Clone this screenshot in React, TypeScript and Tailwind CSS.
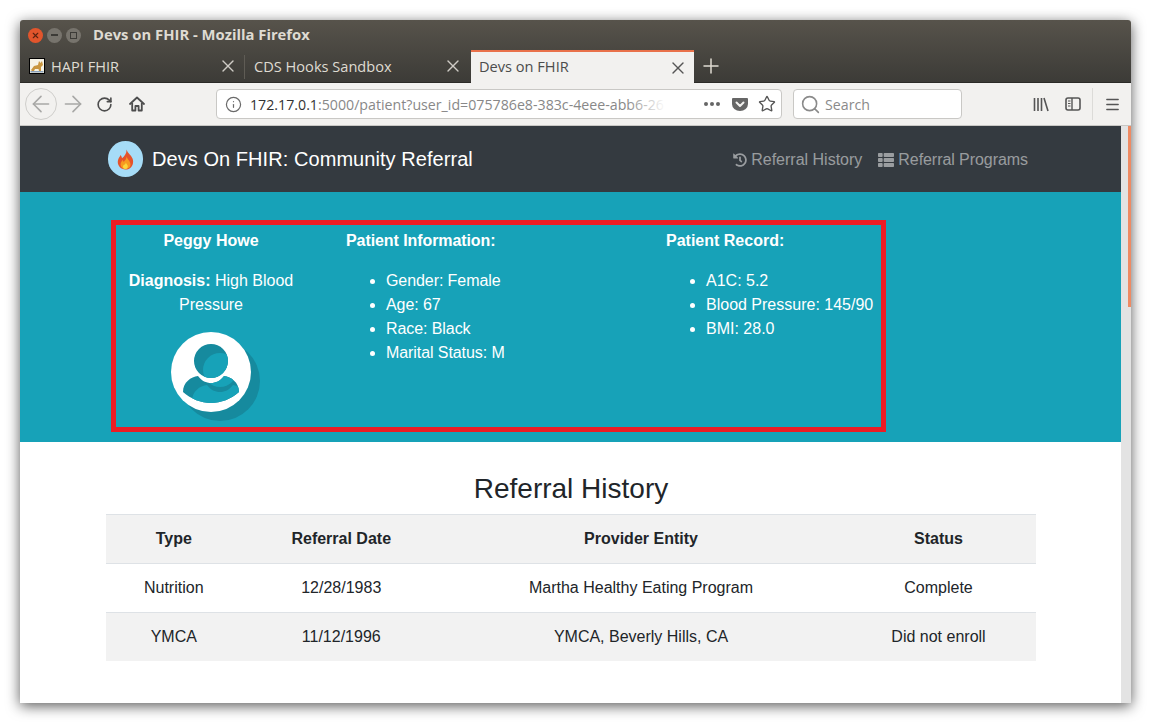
import { ArrowLeft, ArrowRight, RotateCw, Info, Star, Search, Menu, X, Plus } from "lucide-react";
import { FaHistory, FaThList } from "react-icons/fa";

const ui = "font-['Open_Sans','Noto_Sans',sans-serif]";

function Cat() {
  return (
    <svg width="16" height="16" viewBox="0 0 16 16" className="shrink-0">
      <rect x="0.5" y="0.5" width="15" height="15" fill="#f6f3e6" stroke="#000" />
      <path d="M2 12 L5 8 L9 7 L10 3 L11.5 5 L13 3 L14 7 L12 9 L12 13 L10 13 L9.5 11 L6 11 L5 13 L3 13 Z" fill="#c9963f" />
      <path d="M1.5 13 L14.5 13 L14.5 14.5 L1.5 14.5 Z" fill="#8aa0b8" />
    </svg>
  );
}

function HomeIcon() {
  return (
    <svg width="16" height="16" viewBox="0 0 16 16" fill="none" stroke="#4d4d4d" strokeWidth="1.8" strokeLinejoin="round">
      <path d="M1 8 L8 1.5 L15 8" strokeLinecap="round" />
      <path d="M3.2 7 V14.5 H6.4 V10 H9.6 V14.5 H12.8 V7" />
    </svg>
  );
}

function Pocket() {
  return (
    <svg width="16" height="16" viewBox="0 0 16 16">
      <path d="M1 2 H15 Q16 2 16 3 V8 A8 7 0 0 1 0 8 V3 Q0 2 1 2 Z" fill="#666" />
      <path d="M4.5 6.5 L8 10 L11.5 6.5" fill="none" stroke="#f2f1ef" strokeWidth="2" strokeLinecap="round" strokeLinejoin="round" />
    </svg>
  );
}

function Library() {
  return (
    <svg width="16" height="16" viewBox="0 0 16 16" stroke="#555" strokeWidth="1.6" fill="none">
      <path d="M1.5 2 V15 M5 2 V15 M8.5 2 V15 M11 2 L15 15" />
    </svg>
  );
}

function Sidebar() {
  return (
    <svg width="16" height="14" viewBox="0 0 16 14" fill="none">
      <rect x="1" y="1" width="14" height="12" rx="2" stroke="#555" strokeWidth="1.6" />
      <path d="M7 1 V13" stroke="#555" strokeWidth="1.4" />
      <path d="M3 4 H5.5 M3 6.5 H5.5 M3 9 H5.5" stroke="#555" strokeWidth="1.2" />
    </svg>
  );
}

function Flame() {
  return (
    <svg width="17" height="21" viewBox="0 0 17 21">
      <path d="M9.5 0.5 C10.5 4 14 6 15.5 9.5 C17.5 14.5 14.5 20.5 8.5 20.5 C3 20.5 -0.5 15.5 1.2 10.5 C2 8.3 3 7.5 3.6 6 C4.6 7.2 4.8 8.3 5 9.2 C7.5 7 9.8 4.5 9.5 0.5 Z" fill="#e5532b" />
      <path d="M9.5 7.5 C10 10 13.5 12 13.5 15.5 C13.5 18.3 11 20 8.5 20 C5.5 20 3.4 17.8 3.6 15 C3.8 13 5 12 5.6 11 C6.2 11.8 6.4 12.5 6.6 13 C8 11.5 9.5 10 9.5 7.5 Z" fill="#f79a1f" />
      <path d="M8.8 13.5 C9.2 15 11 16 10.8 17.8 C10.6 19.2 9.6 20 8.4 20 C7 20 6 19 6 17.7 C6 16.5 7 16.2 7.3 15.6 C7.8 15.8 8.8 14.8 8.8 13.5 Z" fill="#fcd73c" />
    </svg>
  );
}

const head = "M23 29 a17 17 0 1 0 34 0 a17 17 0 1 0 -34 0 Z";
const body = "M12 60 C12 50 20 45 27 44 C31 49 35 51 40 51 C45 51 49 49 53 44 C60 45 68 50 68 60 C60 67 50 71 40 71 C30 71 20 67 12 60 Z";

function Avatar() {
  return (
    <svg width="90" height="90" viewBox="0 0 90 90" className="block">
      <defs>
        <clipPath id="holes">
          <path d={head} />
          <path d={body} />
        </clipPath>
      </defs>
      <circle cx="49" cy="49" r="40" fill="#168a9e" />
      <circle cx="40" cy="40" r="40" fill="#fff" />
      <g clipPath="url(#holes)">
        <rect width="90" height="90" fill="#168a9e" />
        <g transform="translate(9 9)" fill="#17a2b8">
          <path d={head} />
          <path d={body} />
        </g>
      </g>
    </svg>
  );
}

const rows = [
  ["Nutrition", "12/28/1983", "Martha Healthy Eating Program", "Complete"],
  ["YMCA", "11/12/1996", "YMCA, Beverly Hills, CA", "Did not enroll"],
];

export default function App() {
  return (
    <div className="w-[1151px] h-[723px] bg-white pt-[20px] pl-[20px] overflow-hidden">
      <div className="w-[1111px] h-[683px] flex flex-col rounded-t-[3px] shadow-[0_3px_14px_rgba(0,0,0,0.65)]">
        {/* Title and tabs */}
        <div className={`${ui} h-[63px] shrink-0 flex flex-col rounded-t-[3px] bg-gradient-to-b from-[#57534b] to-[#3c3b37] border-b border-[#2b2a27]`}>
          <div className="h-[30px] flex items-center pl-[8px]">
            <div className="w-[15px] h-[15px] rounded-full bg-[#e2552c] flex items-center justify-center">
              <X size={9} color="#5a2412" strokeWidth={3} />
            </div>
            <div className="ml-[4px] w-[15px] h-[15px] rounded-full bg-[#77746d] flex items-center justify-center">
              <div className="w-[7px] h-[2px] bg-[#3c3b37]" />
            </div>
            <div className="ml-[4px] w-[15px] h-[15px] rounded-full bg-[#77746d] flex items-center justify-center">
              <div className="w-[7px] h-[7px] border border-[#3c3b37]" />
            </div>
            <span className="ml-[12px] mb-[2px] text-[14.8px] font-bold text-[#dfdbd2]">Devs on FHIR - Mozilla Firefox</span>
          </div>
          <div className="h-[32px] flex text-[14.6px] text-[#dfdbd2]">
            <div className="w-[225px] flex items-center pl-[9px] pr-[7px] relative">
              <Cat />
              <span className="ml-[6px] pt-[2px]">HAPI FHIR</span>
              <X size={20} color="#cfccc6" strokeWidth={1.6} className="ml-auto" />
              <div className="absolute right-0 top-[5px] h-[24px] w-px bg-[#5f5c55]" />
            </div>
            <div className="w-[226px] flex items-center pl-[9px] pr-[8px]">
              <span className="pt-[2px]">CDS Hooks Sandbox</span>
              <X size={20} color="#cfccc6" strokeWidth={1.6} className="ml-auto" />
            </div>
            <div className="w-[223px] h-[33px] flex items-center pl-[8px] pr-[6px] bg-[#f2f1ef] border-t-2 border-[#e9714a] text-[#4c4c4c]">
              <span className="mb-[2px]">Devs on FHIR</span>
              <X size={20} color="#555" strokeWidth={1.6} className="ml-auto" />
            </div>
            <div className="ml-[5px] flex items-center">
              <Plus size={24} color="#dfdbd2" strokeWidth={1.5} />
            </div>
          </div>
        </div>

        {/* Toolbar */}
        <div className={`${ui} h-[43px] shrink-0 bg-[#f2f1ef] border-b border-[#c9c8c5] flex items-center pl-[5px]`}>
          <div className="w-[32px] h-[32px] rounded-full border border-[#cfcecb] flex items-center justify-center shrink-0">
            <ArrowLeft size={26} color="#a8a8a6" strokeWidth={1.5} />
          </div>
          <ArrowRight size={26} color="#a8a8a6" strokeWidth={1.5} className="ml-[3px] shrink-0" />
          <RotateCw size={17} color="#4d4d4d" strokeWidth={2.3} className="ml-[10px] shrink-0" />
          <div className="ml-[16px] shrink-0"><HomeIcon /></div>

          <div className="ml-[71px] w-[566px] h-[30px] bg-white border border-[#c9c8c5] rounded-[4px] flex items-center pl-[8px] pr-[5px] shrink-0">
            <Info size={17} color="#6a6a6a" strokeWidth={1.7} className="shrink-0" />
            <div className="ml-[8px] pt-[2px] w-[416px] relative overflow-hidden whitespace-nowrap text-[14.2px]">
              <span className="text-[#333]">172.17.0.1</span>
              <span className="text-[#888]">:5000/patient?user_id=075786e8-383c-4eee-abb6-26</span>
              <div className="absolute right-0 top-0 bottom-0 w-[40px] bg-gradient-to-r from-transparent to-white" />
            </div>
            <div className="ml-auto mr-[12px] flex gap-[2px]">
              <div className="w-[4px] h-[4px] rounded-full bg-[#666]" />
              <div className="w-[4px] h-[4px] rounded-full bg-[#666]" />
              <div className="w-[4px] h-[4px] rounded-full bg-[#666]" />
            </div>
            <Pocket />
            <Star size={18} color="#555" strokeWidth={1.8} className="ml-[10px] shrink-0" />
          </div>

          <div className="ml-[11px] w-[169px] h-[30px] bg-white border border-[#c9c8c5] rounded-[4px] flex items-center pl-[6px] shrink-0">
            <Search size={21} color="#8a8a8a" strokeWidth={1.8} />
            <span className="ml-[4px] pt-[2px] text-[14.2px] text-[#8a8a8a]">Search</span>
          </div>

          <div className="ml-[71px] shrink-0"><Library /></div>
          <div className="ml-[16px] shrink-0"><Sidebar /></div>
          <div className="ml-[11px] w-px h-[32px] bg-[#dcdbd8] shrink-0" />
          <Menu size={17} color="#555" strokeWidth={2} className="ml-[11px] shrink-0" />
        </div>

        {/* Page */}
        <div className="flex-1 flex min-h-0 font-['Liberation_Sans',Arial,sans-serif] text-[16px] leading-[24px] text-[#212529]">
          <div className="flex-1 min-w-0 bg-white">
            <nav className="h-[66px] bg-[#343a40] flex items-center pl-[88px] pr-[93px]">
              <div className="w-[35px] h-[36px] rounded-full bg-[#a6dcf7] flex items-center justify-center">
                <Flame />
              </div>
              <span className="ml-[9px] mb-[1px] text-[20px] tracking-[0.06px] text-white">Devs On FHIR: Community Referral</span>
              <div className="ml-auto pt-[2px] flex items-center text-white/50">
                <FaHistory size={14} />
                <span className="ml-[4px]">Referral History</span>
                <FaThList size={16} className="ml-[16px]" />
                <span className="ml-[4px] tracking-[-0.06px]">Referral Programs</span>
              </div>
            </nav>

            <section className="h-[250px] bg-[#17a2b8] pt-[28px] pl-[91px] text-white">
              <div className="w-[775px] h-[212px] border-[5px] border-[#ed1c24] flex pt-[4px]">
                <div className="w-[190px] shrink-0 px-[5px] text-center">
                  <div className="font-bold">Peggy Howe</div>
                  <div className="mt-[16px]"><b>Diagnosis:</b> High Blood Pressure</div>
                  <div className="mt-[15px] ml-[50px]"><Avatar /></div>
                </div>
                <div className="w-[360px] shrink-0 pl-[40px] [&_*]:tracking-[-0.08px]">
                  <div className="font-bold">Patient Information:</div>
                  <ul className="mt-[16px] list-disc pl-[40px]">
                    <li>Gender: Female</li>
                    <li>Age: 67</li>
                    <li>Race: Black</li>
                    <li>Marital Status: M</li>
                  </ul>
                </div>
                <div className="flex-1">
                  <div className="font-bold">Patient Record:</div>
                  <ul className="mt-[16px] list-disc pl-[40px]">
                    <li>A1C: 5.2</li>
                    <li>Blood Pressure: 145/90</li>
                    <li>BMI: 28.0</li>
                  </ul>
                </div>
              </div>
            </section>

            <section className="pl-[86px] w-[1016px]">
              <h2 className="mt-[30px] mb-[8px] text-center text-[28px] leading-[34px]">Referral History</h2>
              <table className="w-[930px] table-fixed border-collapse text-center">
                <thead>
                  <tr className="bg-[#f2f2f2] h-[49px]">
                    <th className="w-[135.5px] border-y border-[#dee2e6] font-bold">Type</th>
                    <th className="w-[199.5px] border-y border-[#dee2e6] font-bold">Referral Date</th>
                    <th className="w-[400px] border-y border-[#dee2e6] font-bold">Provider Entity</th>
                    <th className="border-y border-[#dee2e6] font-bold">Status</th>
                  </tr>
                </thead>
                <tbody>
                  {rows.map((r, i) => (
                    <tr key={r[0]} className={`${i ? "h-[48px] bg-[#f2f2f2]" : "h-[49px] bg-white"}`}>
                      {r.map((c) => (
                        <td key={c} className={i === 0 ? "border-b border-[#dee2e6]" : ""}>{c}</td>
                      ))}
                    </tr>
                  ))}
                </tbody>
              </table>
            </section>
          </div>

          {/* Scrollbar */}
          <div className="w-[10px] shrink-0 bg-[#e3e3e3] flex justify-end">
            <div className="w-[3px] h-[181px] bg-[#ee8a63]" />
          </div>
        </div>
      </div>
    </div>
  );
}
